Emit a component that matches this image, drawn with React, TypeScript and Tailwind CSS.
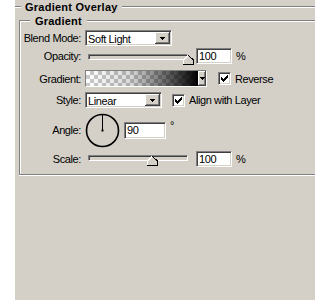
import React from "react";

const sunken =
  "border border-t-[#808080] border-l-[#808080] border-b-white border-r-white shadow-[inset_1px_1px_0_#404040,inset_-1px_-1px_0_#d4d0c8]";
const raised =
  "bg-[#d4d0c8] shadow-[inset_-1px_-1px_0_#404040,inset_1px_1px_0_#fff,inset_-2px_-2px_0_#808080]";

function Tri() {
  return (
    <svg width="5" height="3" viewBox="0 0 5 3" shapeRendering="crispEdges">
      <rect x="0" y="0" width="5" height="1" fill="#000" />
      <rect x="1" y="1" width="3" height="1" fill="#000" />
      <rect x="2" y="2" width="1" height="1" fill="#000" />
    </svg>
  );
}

function Select({ value, w }: { value: string; w: string }) {
  return (
    <div className={`${w} h-[16px] bg-white flex items-stretch ${sunken}`}>
      <div className="flex-1 pl-[2px] pt-[1px] flex items-center leading-[12px]">{value}</div>
      <div className={`w-[15px] m-[1px] flex items-center justify-center ${raised}`}>
        <Tri />
      </div>
    </div>
  );
}

function Check() {
  const runs = [2, 3, 4, 3, 2, 1, 0];
  return (
    <div className={`w-[13px] h-[13px] bg-white flex items-center justify-center shrink-0 ${sunken}`}>
      <svg width="7" height="7" viewBox="0 0 7 7" shapeRendering="crispEdges">
        {runs.map((y, i) => (
          <rect key={i} x={i} y={y} width="1" height="3" fill="#000" />
        ))}
      </svg>
    </div>
  );
}

function Input({ value, w, h }: { value: string; w: string; h: string }) {
  return (
    <div className={`${w} ${h} bg-white pl-[2px] flex items-center ${sunken}`}>{value}</div>
  );
}

function Slider({ pct, trackTop, thumbTop }: { pct: number; trackTop: number; thumbTop: number }) {
  const center = 3 + pct * 100;
  return (
    <div className="relative w-[108px] h-full shrink-0">
      <div
        className={`absolute left-[3px] w-[100px] h-[6px] bg-[#d4d0c8] ${sunken}`}
        style={{ top: trackTop }}
      />
      <svg
        className="absolute"
        style={{ left: center - 5, top: thumbTop }}
        width="11"
        height="10"
        viewBox="0 0 11 10"
        shapeRendering="crispEdges"
      >
        <polygon points="5,0 10,5 10,9 0,9 0,5" fill="#d4d0c8" />
        <polyline points="0.5,9 0.5,5 5,0.5" fill="none" stroke="#fff" strokeWidth="1" />
        <polyline points="5.5,0.5 10.5,5 10.5,9.5 0,9.5" fill="none" stroke="#000" strokeWidth="1" />
      </svg>
    </div>
  );
}

function Label({ children }: { children: React.ReactNode }) {
  return <div className="w-[61px] shrink-0 text-right">{children}</div>;
}

export default function App() {
  return (
    <div className="flex w-[315px] h-[300px] overflow-hidden text-[11px] leading-[14px] text-black [font-family:'Liberation_Sans',Arial,sans-serif]">
      <div className="w-[15px] shrink-0 bg-white" />
      <div className="flex-1 bg-[#d4d0c8] pt-[6px] overflow-hidden">
        <div className="border-t border-[#808080] shadow-[inset_0_1px_0_#fff] min-h-[294px]">
          <div className="-mt-[7px] ml-[6px] px-[4px] w-fit bg-[#d4d0c8] font-bold tracking-[0.25px]">
            Gradient Overlay
          </div>
          <div className="mt-[6px] ml-[4px] w-[320px] border-t border-l border-b border-[#808080] shadow-[inset_1px_1px_0_#fff,0_1px_0_#fff] pb-[7px]">
            <div className="-mt-[7px] ml-[10px] px-[5px] w-fit bg-[#d4d0c8] font-bold tracking-[0.2px]">
              Gradient
            </div>
            <div className="flex flex-col tracking-[-0.4px]">
              <div className="mt-[2px] h-[16px] flex items-center gap-[4px]">
                <Label>Blend Mode:</Label>
                <Select value="Soft Light" w="w-[87px]" />
              </div>
              <div className="mt-[2px] h-[16px] flex items-center gap-[4px]">
                <Label>Opacity:</Label>
                <Slider pct={1} trackTop={6} thumbTop={7} />
                <div className="ml-[-1px] flex items-center gap-[4px]">
                  <Input value="100" w="w-[36px]" h="h-[16px]" />
                  <span>%</span>
                </div>
              </div>
              <div className="mt-[6px] h-[17px] flex items-center gap-[4px]">
                <Label>Gradient:</Label>
                <div className={`w-[122px] h-[17px] flex ${sunken}`}>
                  <div className="flex-1 bg-[linear-gradient(to_right,rgba(0,0,0,0)_0%,rgba(0,0,0,0.15)_40%,#000_100%),repeating-conic-gradient(#c9c9c9_0_25%,#fff_0_50%)] [background-size:100%_100%,8px_8px]" />
                  <div className={`w-[8px] flex items-center justify-center ${raised}`}>
                    <Tri />
                  </div>
                </div>
                <div className="ml-[7px] flex items-center gap-[4px]">
                  <Check />
                  <span>Reverse</span>
                </div>
              </div>
              <div className="mt-[5px] h-[16px] flex items-center gap-[4px]">
                <Label>Style:</Label>
                <Select value="Linear" w="w-[77px]" />
                <div className="ml-[6px] flex items-center gap-[4px]">
                  <Check />
                  <span>Align with Layer</span>
                </div>
              </div>
              <div className="mt-[5px] h-[34px] flex items-center gap-[4px]">
                <Label>Angle:</Label>
                <svg width="35" height="35" viewBox="0 0 35 35" className="shrink-0">
                  <circle cx="17.5" cy="17.5" r="16" fill="none" stroke="#000" strokeWidth="1.6" />
                  <line x1="17.5" y1="17.5" x2="17.5" y2="2" stroke="#000" strokeWidth="1" />
                  <rect x="16.5" y="16.5" width="2" height="2" fill="#000" />
                </svg>
                <Input value="90" w="w-[42px]" h="h-[17px]" />
                <span className="self-start mt-[7px] leading-[10px]">°</span>
              </div>
              <div className="mt-[4px] h-[16px] flex items-center gap-[4px]">
                <Label>Scale:</Label>
                <Slider pct={0.643} trackTop={4} thumbTop={5} />
                <div className="ml-[-1px] flex items-center gap-[4px]">
                  <Input value="100" w="w-[36px]" h="h-[16px]" />
                  <span>%</span>
                </div>
              </div>
            </div>
          </div>
        </div>
      </div>
    </div>
  );
}
